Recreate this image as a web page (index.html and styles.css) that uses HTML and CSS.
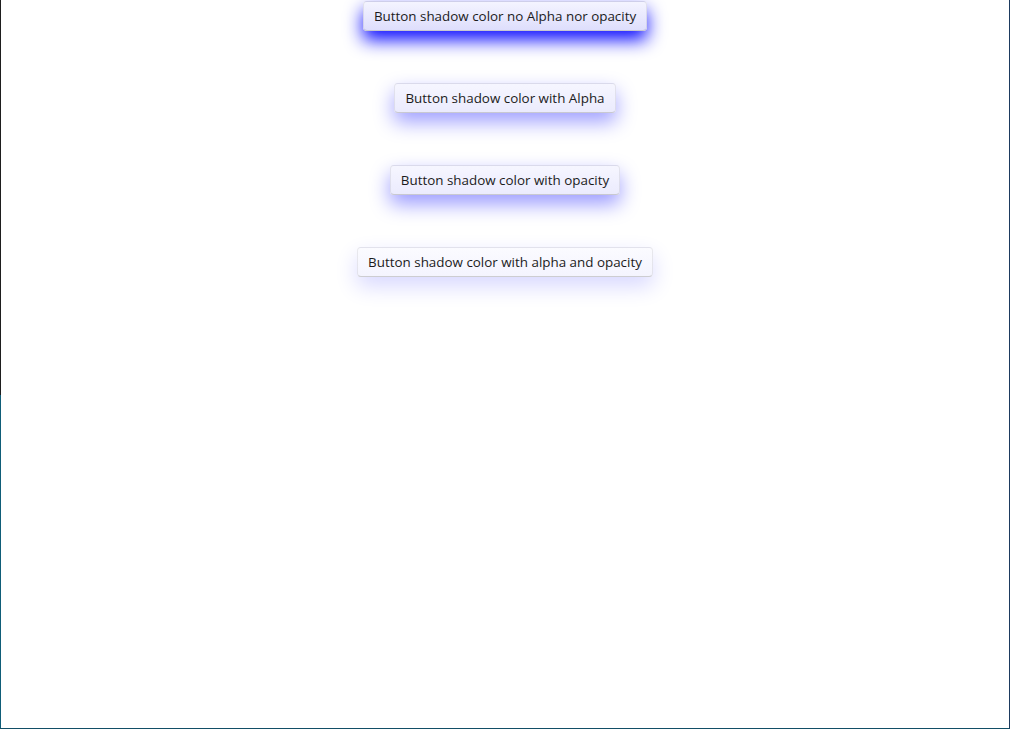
FILE: index.html
```html
<!DOCTYPE html>
<html>
<head>
<meta charset="utf-8">
<link rel="stylesheet" href="styles.css">
</head>
<body>
<div class="window">
  <div class="stack">
    <button class="btn b1">Button shadow color no Alpha nor opacity</button>
    <button class="btn b2">Button shadow color with Alpha</button>
    <button class="btn b3">Button shadow color with opacity</button>
    <button class="btn b4">Button shadow color with alpha and opacity</button>
  </div>
</div>
</body>
</html>
```
FILE: styles.css
```css
html, body {
  margin: 0;
  padding: 0;
  width: 1010px;
  height: 729px;
  overflow: hidden;
  background: #ffffff;
}
.window {
  box-sizing: border-box;
  width: 1010px;
  height: 729px;
  border-right: 1px solid #1d3a5e;
  border-bottom: 1px solid #124e66;
  background: linear-gradient(to bottom, #1e1e1e 0, #1e1e1e 395px, #0f5d78 395px, #0f5d78 100%) left top / 1px 100% no-repeat, #ffffff;
  padding-left: 1px;
}
.stack {
  display: flex;
  flex-direction: column;
  align-items: center;
  gap: 52px;
  padding-top: 1px;
}
.btn {
  font-family: "Open Sans", "Noto Sans", sans-serif;
  font-size: 13.4px;
  color: #1b1b1b;
  height: 30px;
  padding: 0 10px;
  border: 1px solid rgba(0, 0, 0, 0.07);
  border-bottom-color: rgba(0, 0, 0, 0.18);
  border-radius: 4px;
  cursor: default;
}
.b1 {
  background: linear-gradient(to bottom, #f4f4ff, #dedefc);
  box-shadow: 0 9px 18px rgba(0, 0, 255, 0.95);
}
.b2 {
  background: linear-gradient(to bottom, #f6f6ff, #ebebfd);
  box-shadow: 0 9px 20px rgba(0, 0, 255, 0.38);
}
.b3 {
  background: linear-gradient(to bottom, #f6f6ff, #ebebfd);
  box-shadow: 0 9px 20px rgba(0, 0, 255, 0.4);
}
.b4 {
  background: linear-gradient(to bottom, #fbfbff, #f4f4fe);
  box-shadow: 0 9px 22px rgba(0, 0, 255, 0.16);
}
```
